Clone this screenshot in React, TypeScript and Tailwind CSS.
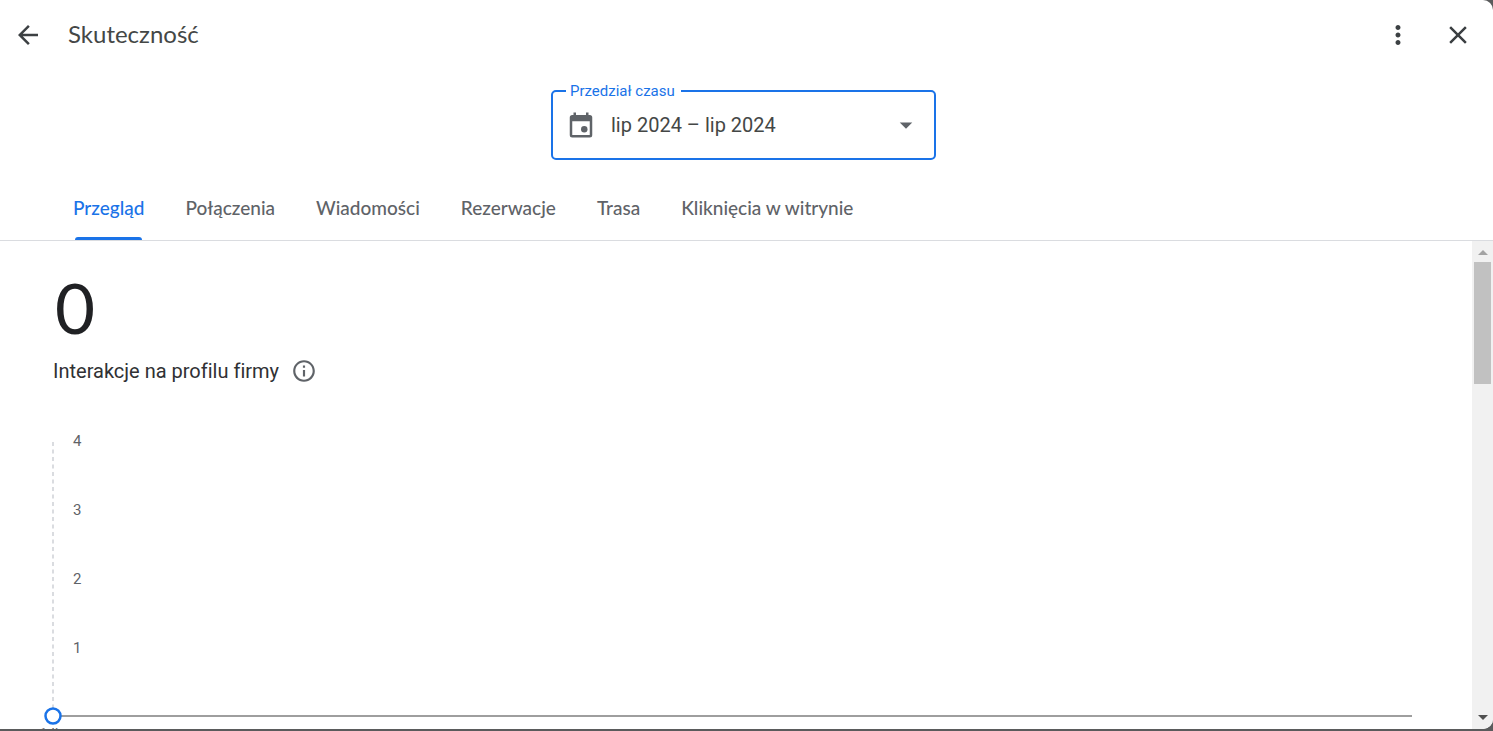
import { MdArrowBack, MdArrowDropDown, MdClose, MdInfoOutline, MdMoreVert } from "react-icons/md";

const TABS = ["Przegląd", "Połączenia", "Wiadomości", "Rezerwacje", "Trasa", "Kliknięcia w witrynie"];

const TICKS = [4, 3, 2, 1];
const STEP = 69;
const TOP = 34;
const BASE = TOP + STEP * 4 - 1;

function Header() {
  return (
    <header className="flex h-[70px] items-center pl-[14px] pr-[21px] text-[#3c4043]">
      <button type="button" aria-label="Wstecz" className="flex size-7 items-center justify-center">
        <MdArrowBack className="size-[30px] shrink-0" />
      </button>
      <h1 className="ml-[26px] pb-[2px] font-['Lato',sans-serif] text-2xl text-[#444746]">Skuteczność</h1>
      <button type="button" aria-label="Więcej opcji" className="ml-auto flex size-7 items-center justify-center">
        <MdMoreVert className="size-[30px] shrink-0" />
      </button>
      <button type="button" aria-label="Zamknij" className="ml-8 flex size-7 items-center justify-center">
        <MdClose className="size-[30px] shrink-0" />
      </button>
    </header>
  );
}

function CalendarIcon() {
  return (
    <svg viewBox="0 0 24 24" fill="currentColor" className="pointer-events-none absolute left-0 size-[30px] text-[#5f6368]">
      <path d="M16 2v2H8V2H6v2H5a2 2 0 0 0-2 2v14a2 2 0 0 0 2 2h14a2 2 0 0 0 2-2V6a2 2 0 0 0-2-2h-1V2h-2zM5 9h14v11H5V9z" />
      <circle cx="14.6" cy="15.4" r="2.6" />
    </svg>
  );
}

function DateRange() {
  return (
    <fieldset className="mx-auto mt-[13px] w-[385px] rounded-[5px] border-2 border-[#1a73e8] px-[13px]">
      <legend className="h-4 pr-[6px] pl-1 text-[15px] leading-4 text-[#1a73e8]">
        <label htmlFor="range">Przedział czasu</label>
      </legend>
      <div className="relative flex h-[59px] items-center pb-[7px]">
        <CalendarIcon />
        <select
          id="range"
          className="h-11 w-full appearance-none bg-transparent pl-[45px] text-xl text-[#444746] outline-none"
        >
          <option>lip 2024 – lip 2024</option>
        </select>
        <MdArrowDropDown className="pointer-events-none absolute right-0 size-[30px] text-[#5f6368]" />
      </div>
    </fieldset>
  );
}

function Tabs() {
  return (
    <div
      role="tablist"
      className="mt-5 flex h-[61px] gap-[41px] border-b border-[#dadce0] pl-[73px] font-['Lato',sans-serif] text-[19px] font-medium text-[#5f6368]"
    >
      {TABS.map((tab, i) => (
        <button
          key={tab}
          type="button"
          role="tab"
          aria-selected={i === 0}
          className={i === 0 ? "relative pb-1 text-[#1a73e8]" : "relative pb-1"}
        >
          {tab}
          {i === 0 && <span className="absolute inset-x-[2px] bottom-0 h-[3px] rounded-t-[3px] bg-[#1a73e8]" />}
        </button>
      ))}
    </div>
  );
}

function Chart() {
  return (
    <div className="mt-[22px] pl-[53px] pr-[60px]">
      <svg className="h-[360px] w-full overflow-visible" role="img" aria-label="Interakcje w czasie">
        <line x1="0" x2="0" y1={TOP + 1} y2={BASE} stroke="#dadce0" strokeWidth="2" strokeDasharray="4 3.5" />
        {TICKS.map((tick, i) => (
          <text key={tick} x="20" y={TOP + i * STEP + 5} fontSize="15" fill="#5f6368">
            {tick}
          </text>
        ))}
        <line x1="0" x2="100%" y1={BASE} y2={BASE} stroke="#9e9e9e" strokeWidth="2" />
        <circle cx="0" cy={BASE} r="7.5" fill="#fff" stroke="#1a73e8" strokeWidth="2.5" />
        <text x="0" y={BASE + 23} textAnchor="middle" fontSize="15" fill="#5f6368">
          1 lip
        </text>
      </svg>
    </div>
  );
}

function Scrollbar() {
  return (
    <div aria-hidden="true" className="flex w-[21px] shrink-0 flex-col items-center bg-[#f1f1f1]">
      <svg viewBox="0 0 10 5" className="mt-[9px] mb-[7px] h-[5px] w-[10px] shrink-0" fill="#a3a3a3">
        <path d="M0 5L5 0L10 5Z" />
      </svg>
      <div className="h-[122px] w-[17px] bg-[#c1c1c1]" />
      <svg viewBox="0 0 10 5" className="mt-auto mb-[9px] h-[5px] w-[10px] shrink-0" fill="#505050">
        <path d="M0 0L5 5L10 0Z" />
      </svg>
    </div>
  );
}

export default function App() {
  return (
    <div className="h-screen bg-[#5a5b5c] pb-[2px] font-['Roboto',sans-serif]">
      <main className="flex h-full flex-col overflow-hidden rounded-r-[10px] bg-white">
        <Header />
        <div className="pr-[6px]">
          <DateRange />
        </div>
        <Tabs />
        <div className="flex min-h-0 flex-1">
          <section className="min-w-0 flex-1 overflow-hidden">
            <p className="pt-[31px] pl-[55px] font-['Lato',sans-serif] text-[69px] leading-[72px] text-[#202124]">0</p>
            <h2 className="mt-[13px] flex items-center gap-3 pl-[53px] text-xl text-[#303134] [font-variant-ligatures:none]">
              Interakcje na profilu firmy
              <button type="button" aria-label="Informacje" className="text-[#5f6368]">
                <MdInfoOutline className="size-[26px]" />
              </button>
            </h2>
            <Chart />
          </section>
          <Scrollbar />
        </div>
      </main>
    </div>
  );
}
